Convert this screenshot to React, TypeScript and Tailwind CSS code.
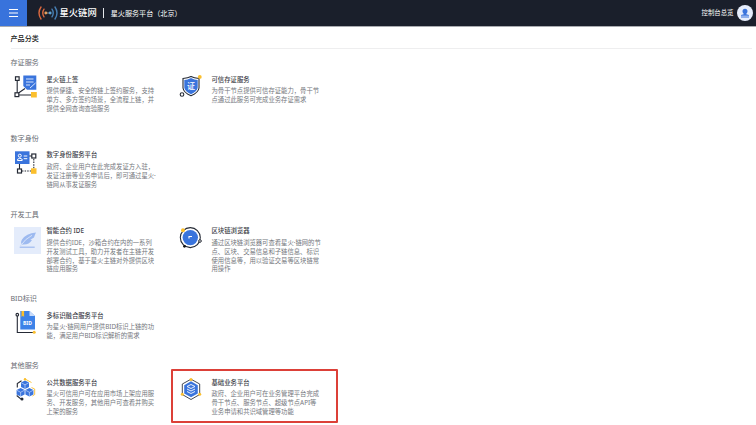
import type { ReactNode } from 'react';

type Item = { title: string; lines: string[]; icon: ReactNode; highlighted?: boolean };
type Section = { name: string; items: Item[] };

const BLUE = '#3a74dc';
const DARK = '#252a35';
const GOLD = '#fbbf2d';

function Icon({ children }: { children: ReactNode }) {
  return (
    <svg viewBox="0 0 27 27" className="block h-[27px] w-[27px] shrink-0" fill="none">
      {children}
    </svg>
  );
}

const signIcon = (
  <Icon>
    <path d="M3.200 5v13M4.500 18L11 13.500M5 20h12" stroke={DARK} strokeWidth="1.100" />
    <path d="M9.300 0.500H22.300V14.800H13L9.300 11Z" fill={BLUE} />
    <path d="M12 4h7.500M12 7h7.500M12 10h4M16 13l5.500-5" stroke="#e8f0ff" strokeWidth="0.900" />
    <rect x="1.500" y="1.800" width="3.600" height="3.600" fill="#fff" stroke={DARK} strokeWidth="1.200" />
    <rect x="1" y="17.800" width="3.800" height="3.800" fill="#fff" stroke={DARK} strokeWidth="1.200" />
    <rect x="17" y="17" width="5.800" height="5.500" fill={GOLD} />
  </Icon>
);

const shieldIcon = (
  <Icon>
    <path d="M12 1.500Q15 3 20 3.500V13Q19.500 17.500 12 20.700Q4.500 17.500 4 13V3.500Q9 3 12 1.500Z" stroke={DARK} strokeWidth="1.100" />
    <path d="M12 3Q15.500 4.800 18.700 5V12.800Q18 16.500 12 19.200Q6 16.500 5.300 12.800V5Q8.500 4.800 12 3Z" fill={BLUE} />
    <circle cx="20.800" cy="1.900" r="1.900" fill={GOLD} />
    <circle cx="3" cy="19.500" r="1.800" fill="#fff" stroke={DARK} strokeWidth="1.100" />
    <text x="12" y="13.800" textAnchor="middle" fill="#fff" fontSize="8" className="font-medium">证</text>
  </Icon>
);

const identityIcon = (
  <Icon>
    <path d="M15 5h4M5.500 13v6" stroke={DARK} strokeWidth="1.100" />
    <path d="M19.800 8v10M8 20h9" stroke={DARK} strokeWidth="1.100" strokeDasharray="1.500 1.100" />
    <rect x="1" y="0.300" width="14.500" height="12.700" fill={BLUE} />
    <circle cx="5.800" cy="4.700" r="1.500" stroke="#fff" />
    <path d="M3.500 9.500V8.300Q5.800 6 8.200 8.300V9.500ZM9.700 5h3.600M9.700 7.700h3.600" stroke="#fff" />
    <rect x="17.800" y="3" width="4" height="4" fill="#fff" stroke={DARK} strokeWidth="1.200" />
    <rect x="3.500" y="18" width="4" height="4" fill="#fff" stroke={DARK} strokeWidth="1.200" />
    <rect x="17" y="17.300" width="5.500" height="5.500" fill={GOLD} />
  </Icon>
);

const ideIcon = (
  <Icon>
    <rect width="27" height="27" fill="#e4ecfb" />
    <path d="M22 5.500Q12 6.500 8 12.500Q6.300 15.500 7.700 17L6 18.800L8.700 17.500Q15 18 18 13L16.300 12.700L20 10.500Q21 7.500 22 5.500Z" fill="#9dbaf0" />
    <path d="M7 18.200Q11 12 18 8.300" stroke="#e4ecfb" strokeWidth="0.800" />
    <path d="M5.700 20.200h15" stroke="#9dbaf0" strokeWidth="1.200" />
  </Icon>
);

const explorerIcon = (
  <Icon>
    <circle cx="11.300" cy="10.600" r="10" stroke={DARK} strokeWidth="1.100" />
    <circle cx="11.300" cy="10.600" r="7.700" fill={BLUE} />
    <path d="M10 11.500V9.500H13" stroke="#fff" strokeWidth="1.100" />
    <circle cx="4" cy="3.300" r="2" fill={GOLD} />
    <circle cx="5.500" cy="19.300" r="1.400" fill="#111" />
    <circle cx="21" cy="14" r="1.300" fill="#fff" stroke={DARK} />
  </Icon>
);

const bidIcon = (
  <Icon>
    <path d="M3.300 4v17.500H20" stroke={DARK} strokeWidth="1.100" />
    <path d="M6.300 0H15.500L21 5V18.500H6.300Z" fill="#3d82e8" />
    <path d="M15.500 0V5H21Z" fill="#c9dcfa" />
    <path d="M7.500 0h2.600v6l-1.300-1.200-1.300 1.200Z" fill={GOLD} />
    <circle cx="3.300" cy="3.700" r="1.300" fill="#fff" stroke={DARK} strokeWidth="1.100" />
    <circle cx="20.200" cy="21.300" r="1.500" fill={GOLD} />
    <text x="13.400" y="13.700" textAnchor="middle" fill="#fff" fontSize="5" className="font-bold">BID</text>
  </Icon>
);

function Cube({ x, y }: { x: number; y: number }) {
  return (
    <g transform={`translate(${x} ${y})`}>
      <path d="M0 -4.200L4 -2.200V2.300L0 4.300L-4 2.300V-2.200Z" fill={BLUE} />
      <path d="M-3.700 -2L0 0L3.700 -2M0 0V4" stroke="#dfe9ff" strokeWidth="0.600" />
    </g>
  );
}

const dataIcon = (
  <Icon>
    <path d="M7.500 2.800L3.300 5.500V9.500M2.700 17.500L7 21.200" stroke={DARK} strokeWidth="1.100" />
    <path d="M11 1L17.500 4.500M17.500 9.500L20.700 11V16.500L18.500 18" stroke={GOLD} strokeWidth="0.900" />
    <Cube x={11} y={6.800} />
    <Cube x={6.600} y={14.300} />
    <Cube x={15.400} y={14.300} />
    <circle cx="11" cy="1.200" r="1.200" fill={GOLD} />
    <circle cx="8" cy="21" r="1.500" fill={DARK} />
  </Icon>
);

const platformIcon = (
  <Icon>
    <path d="M12 1.200L20.700 6V16.500L12 21.500L3.300 16.500V6Z" stroke="#454a55" strokeWidth="1" />
    <path d="M12 3.300L18.800 7.200V15.400L12 19.300L5.200 15.400V7.200Z" fill={BLUE} />
    <path d="M12 6.500l4 2-4 2-4-2ZM8 11l4 2 4-2M8 13.500l4 2 4-2" stroke="#fff" strokeWidth="0.900" />
    <circle cx="12" cy="1.500" r="1.500" fill={GOLD} />
    <circle cx="3.300" cy="16.200" r="1.500" fill={GOLD} />
    <circle cx="20.700" cy="16.200" r="1.500" fill={GOLD} />
  </Icon>
);

const sections: Section[] = [
  {
    name: '存证服务',
    items: [
      { title: '星火链上签', icon: signIcon, lines: ['提供便捷、安全的链上签约服务，支持', '单方、多方签约场景，全流程上链，并', '提供全网查询查验服务'] },
      { title: '可信存证服务', icon: shieldIcon, lines: ['为骨干节点提供可信存证能力，骨干节', '点通过此服务可完成业务存证需求'] },
    ],
  },
  {
    name: '数字身份',
    items: [
      { title: '数字身份服务平台', icon: identityIcon, lines: ['政府、企业用户在此完成发证方入驻，', '发证注册等业务申请后，即可通过星火·', '链网从事发证服务'] },
    ],
  },
  {
    name: '开发工具',
    items: [
      { title: '智能合约 IDE', icon: ideIcon, lines: ['提供合约IDE，沙箱合约在内的一系列', '开发测试工具，助力开发者在主链开发', '部署合约，基于星火主链对外提供区块', '链应用服务'] },
      { title: '区块链浏览器', icon: explorerIcon, lines: ['通过区块链浏览器可查看星火·链网的节', '点、区块、交易信息和子链信息、标识', '使用信息等，用以验证交易等区块链常', '用操作'] },
    ],
  },
  {
    name: 'BID标识',
    items: [
      { title: '多标识融合服务平台', icon: bidIcon, lines: ['为星火·链网用户提供BID标识上链的功', '能，满足用户BID标识解析的需求'] },
    ],
  },
  {
    name: '其他服务',
    items: [
      { title: '公共数据服务平台', icon: dataIcon, lines: ['星火可信用户可在应用市场上架应用服', '务、开发服务，其他用户可查看并购买', '上架的服务'] },
      { title: '基础业务平台', icon: platformIcon, highlighted: true, lines: ['政府、企业用户可在业务管理平台完成', '骨干节点、服务节点、超级节点API等', '业务申请和共识域管理等功能'] },
    ],
  },
];

function Card({ item }: { item: Item }) {
  return (
    <article className="relative flex w-[165px] shrink-0">
      {item.highlighted && (
        <div className="pointer-events-none absolute -top-[9px] -left-[8px] h-[54px] w-[167px] rounded-[1px] border-2 border-[#dc4038]" />
      )}
      <div className="w-[32.500px] shrink-0 pt-[0.500px]">{item.icon}</div>
      <div className="whitespace-nowrap">
        <h3 className="h-[10px] text-[6.350px] leading-[10px] font-medium text-[#3c4047]">{item.title}</h3>
        <p className="mt-[2.500px] text-[6.330px] leading-[8.950px] text-[#74777d]">
          {item.lines.map((line) => (
            <span key={line} className="block">{line}</span>
          ))}
        </p>
      </div>
    </article>
  );
}

export default function App() {
  return (
    <div className="h-[425px] w-[756px] overflow-hidden bg-white font-['Noto_Sans','Noto_Sans_CJK_SC',sans-serif]">
      <header className="flex h-[27px] items-center border-b border-[#a9abb0] bg-[#1a1f2b] text-white">
        <button aria-label="菜单" className="flex h-[26px] w-[27px] items-center justify-center bg-[#3873dc]">
          <svg viewBox="0 0 9 8" className="h-2 w-[9px]" stroke="#fff" strokeWidth="1">
            <path d="M0 .5h9M0 4h9M0 7.500h9" />
          </svg>
        </button>
        <svg viewBox="0 0 20 14" className="ml-[10.500px] h-[14px] w-5" fill="none" strokeWidth="1.400" strokeLinecap="round">
          <path d="M3 1Q-1 7 3 13M6 3.200Q3.500 7 6 10.800" stroke="#d9683f" />
          <path d="M17 1Q21 7 17 13M14 3.200Q16.500 7 14 10.800" stroke="#477fb4" />
          <path d="M8 7h4" stroke="#8f999e" strokeWidth="1" />
          <circle cx="7.800" cy="7" r="1.400" fill="#e5a15e" />
          <circle cx="12.200" cy="7" r="1.400" fill="#5ba1d4" />
        </svg>
        <span className="ml-[2px] text-[9.300px] leading-[14px] font-medium whitespace-nowrap">星火链网</span>
        <span className="ml-[6px] h-[10px] w-px bg-[#e5e7eb]" />
        <span className="ml-[7px] text-[7.100px] leading-[14px] whitespace-nowrap">星火服务平台（北京）</span>
        <span className="ml-auto text-[6.400px] leading-[14px] whitespace-nowrap">控制台总览</span>
        <svg viewBox="0 0 16 16" className="mr-[3.500px] ml-[3px] h-4 w-4">
          <circle cx="8" cy="8" r="8" fill="#e5edfc" />
          <path d="M8 3.800a2.500 2.500 0 0 1 2.500 2.500c0 1.200-.6 1.900-1.200 2.400v.6l2.700.7v.8H4V10l2.700-.7v-.6c-.6-.5-1.200-1.200-1.200-2.400A2.500 2.500 0 0 1 8 3.800ZM4 11.500h8v1H4Z" fill={BLUE} />
        </svg>
      </header>
      <div className="mr-[4px] ml-[10.500px] flex h-[22px] items-center border-b border-[#eeeeef] text-[7.100px] leading-[10px] font-medium text-[#171a20]">
        产品分类
      </div>
      <main className="flex flex-col gap-[18.950px] pt-[8px] pl-[10.500px]">
        {sections.map((section) => (
          <section key={section.name}>
            <h2 className="h-[10px] text-[7.100px] leading-[10px] text-[#686c72]">{section.name}</h2>
            <div className="mt-[7.500px] flex items-start pl-[3.500px]">
              {section.items.map((item) => (
                <Card key={item.title} item={item} />
              ))}
            </div>
          </section>
        ))}
      </main>
    </div>
  );
}
